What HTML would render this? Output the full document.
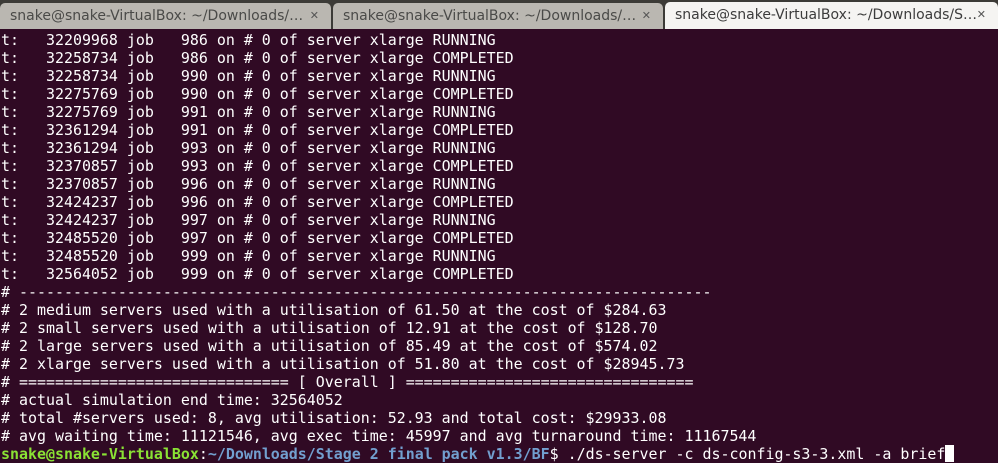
<!DOCTYPE html>
<html><head><meta charset="utf-8"><style>
html,body{margin:0;padding:0;width:998px;height:463px;overflow:hidden;background:#300a24}
#bar{position:absolute;left:0;top:0;width:998px;height:29px;background:#3c3b37}
.tab{position:absolute;top:3px;height:26px;background:#bab7b1;border-radius:5px 5px 0 0;font-family:"DejaVu Sans","Liberation Sans",sans-serif;font-size:14px;color:#4a4a48;line-height:26px;box-sizing:border-box;padding-left:10px;white-space:nowrap;overflow:hidden}
.tab .x{position:absolute;right:12px;top:0;font-size:11px;color:#555}
.act{background:#f5f4f2;top:2px;height:27px;color:#3c3c3c}
#term{position:absolute;left:1px;top:31px;font-family:"DejaVu Sans Mono","Liberation Mono",monospace;font-size:14.95px;line-height:18px;color:#ffffff;white-space:pre}
.g{color:#8ae234;font-weight:bold}.b{color:#729fcf;font-weight:bold}
.cur{background:#fff;display:inline-block;width:9px;height:17px;vertical-align:top}
</style></head><body>
<div id="bar">
<div class="tab" style="left:0;width:331px">snake@snake-VirtualBox: ~/Downloads/…<span class="x">✕</span></div>
<div class="tab" style="left:333px;width:330px">snake@snake-VirtualBox: ~/Downloads/…<span class="x">✕</span></div>
<div class="tab act" style="left:665px;width:333px">snake@snake-VirtualBox: ~/Downloads/S…<span class="x">✕</span></div>
</div>
<div id="term">t:   32209968 job   986 on # 0 of server xlarge RUNNING
t:   32258734 job   986 on # 0 of server xlarge COMPLETED
t:   32258734 job   990 on # 0 of server xlarge RUNNING
t:   32275769 job   990 on # 0 of server xlarge COMPLETED
t:   32275769 job   991 on # 0 of server xlarge RUNNING
t:   32361294 job   991 on # 0 of server xlarge COMPLETED
t:   32361294 job   993 on # 0 of server xlarge RUNNING
t:   32370857 job   993 on # 0 of server xlarge COMPLETED
t:   32370857 job   996 on # 0 of server xlarge RUNNING
t:   32424237 job   996 on # 0 of server xlarge COMPLETED
t:   32424237 job   997 on # 0 of server xlarge RUNNING
t:   32485520 job   997 on # 0 of server xlarge COMPLETED
t:   32485520 job   999 on # 0 of server xlarge RUNNING
t:   32564052 job   999 on # 0 of server xlarge COMPLETED
# -----------------------------------------------------------------------------
# 2 medium servers used with a utilisation of 61.50 at the cost of $284.63
# 2 small servers used with a utilisation of 12.91 at the cost of $128.70
# 2 large servers used with a utilisation of 85.49 at the cost of $574.02
# 2 xlarge servers used with a utilisation of 51.80 at the cost of $28945.73
# ============================== [ Overall ] ================================
# actual simulation end time: 32564052
# total #servers used: 8, avg utilisation: 52.93 and total cost: $29933.08
# avg waiting time: 11121546, avg exec time: 45997 and avg turnaround time: 11167544
<span class="g">snake@snake-VirtualBox</span>:<span class="b">~/Downloads/Stage 2 final pack v1.3/BF</span>$ ./ds-server -c ds-config-s3-3.xml -a brief<span class="cur"></span></div>
</body></html>
